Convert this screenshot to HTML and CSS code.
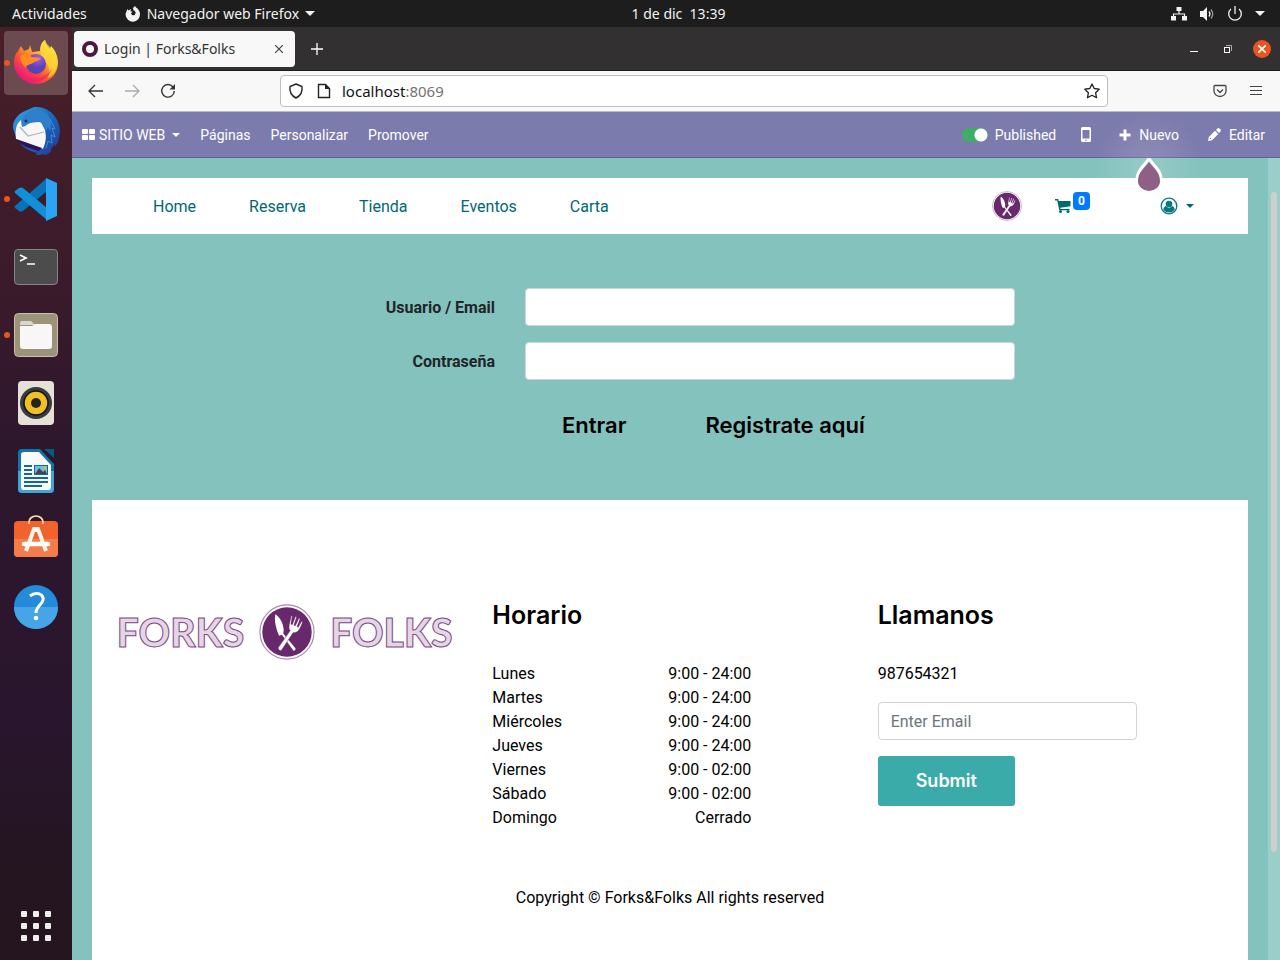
FILE: index.html
```html
<!DOCTYPE html>
<html lang="es">
<head>
<meta charset="utf-8">
<meta name="viewport" content="width=device-width, initial-scale=1">
<title>Login | Forks&amp;Folks</title>
<link rel="stylesheet" href="styles.css">
</head>
<body>
<svg class="defs" aria-hidden="true">
  <symbol id="emblem" viewBox="0 0 60 60">
    <circle cx="30" cy="30" r="29" fill="#fff" stroke="#a98aad" stroke-width="1.2"/>
    <circle cx="30" cy="30" r="26.5" fill="#68296c"/>
    <path d="M17.500 11c5 3 8.500 10 9 16.500l-.5 4L39 47.500q.5 2.500-2 2.500L24.500 33l-3 1C18.500 27 16 18 17.500 11z" fill="#fff"/>
    <path d="M20.500 47 33.500 28.500c-2.500-3-1-6 1-16l1.200.4-1.500 8.600 1.500.6 3.300-8.800 1.300.6-2.800 8.800 1.400.6 3.900-8.300 1.200.7-3.200 8.700 1.200.6 3.500-6.300 1.200.7c-3 8.500-5.500 12-10 11.200L24 49.500q-3 1-3.500-2.500z" fill="#fff" stroke="#68296c" stroke-width=".5"/>
  </symbol>
</svg>

<header class="panel">
  <div class="panel-left">
    <button class="panel-btn">Actividades</button>
    <button class="panel-btn app-menu">
      <svg width="16" height="16" viewBox="0 0 16 16"><path d="M1 6.500 2.500 3l1 1.500L6 3l-.5 2.500h2L6 7.500c1 3 5 2 4.500-1-.2-1.500-1-2-2-2L8 2l2-2c1 2 4.500 3 5 7.500a7 7.500 0 0 1-14.500 1z" fill="#f2f2f2"/></svg>
      Navegador web Firefox <span class="caret"></span>
    </button>
  </div>
  <time class="clock">1 de dic&nbsp; 13:39</time>
  <div class="panel-right">
    <svg width="16" height="16" viewBox="0 0 16 16" fill="#f2f2f2"><rect x="5.500" y="1" width="5" height="4"/><rect x="0" y="10" width="5" height="4.500"/><rect x="11" y="10" width="5" height="4.500"/><path d="M8 5v3M2.500 10V8h11v2" fill="none" stroke="#f2f2f2" stroke-width="1.200"/></svg>
    <svg width="16" height="16" viewBox="0 0 16 16"><path d="M1 5h3l4-4v14l-4-4H1z" fill="#f2f2f2"/><path d="M10 5.500q2 2.500 0 5" fill="none" stroke="#f2f2f2" stroke-width="1.300"/><path d="M12 3.500q3.500 4.500 0 9" fill="none" stroke="#999" stroke-width="1.300"/></svg>
    <svg width="16" height="16" viewBox="0 0 16 16" fill="none" stroke="#f2f2f2" stroke-width="1.300"><path d="M8 0v8M4 3a6.300 6.300 0 1 0 8 0"/></svg>
    <span class="caret"></span>
  </div>
</header>

<div class="desktop">
  <nav class="dock" aria-label="Aplicaciones">
    <button class="dock-app active running" aria-label="Firefox">
      <svg width="48" height="48" viewBox="0 0 48 48">
        <defs>
          <linearGradient id="fx" x1=".85" y1=".1" x2=".2" y2=".9"><stop offset="0" stop-color="#fff34a"/><stop offset=".35" stop-color="#ffb028"/><stop offset=".65" stop-color="#ff5235"/><stop offset="1" stop-color="#e71582"/></linearGradient>
          <radialGradient id="fp" cx=".6" cy=".2"><stop offset="0" stop-color="#a55cf8"/><stop offset="1" stop-color="#5b42b5"/></radialGradient>
        </defs>
        <path d="M5 14 9 7l3 5 5-2 1-4 2 7 8-1c0-6 2-9 5-11 1 4 2 6 5 9l1-3c5 5 7 11 7 17a22 21 0 0 1-44 0c0-5 1-8 3-11z" fill="url(#fx)"/>
        <path d="M29 11c0-5 1-8 4-10 1 6 12 9 12 24-1 8-5 12-9 14 3-7 1-16-7-19z" fill="#ffd83a" opacity=".75"/>
        <circle cx="24" cy="25" r="10" fill="url(#fp)"/>
        <path d="M8 17c5-3 9-1 12 1l9 1c-3 4-6 3-8 5l-2 1c-3 1-5 1-5 4-4-4-6-7-6-12z" fill="#ff8d22"/>
        <path d="M4 28c5 14 29 16 36 1-4 16-29 22-36-1z" fill="#ee2460" opacity=".65"/>
      </svg>
    </button>
    <button class="dock-app" aria-label="Thunderbird">
      <svg width="48" height="48" viewBox="0 0 48 48">
        <defs><linearGradient id="tb" x1="0" y1="0" x2="1" y2="1"><stop offset="0" stop-color="#3aa5e8"/><stop offset=".5" stop-color="#1769be"/><stop offset="1" stop-color="#2c318d"/></linearGradient></defs>
        <path d="M1 21C0 14 7 6 13 4l9-4c14-1 26 10 26 25l-2 10-3 5v-3l-4 5v3l-5 3-4-1-8 4 3-5C13 43 5 37 1 21z" fill="url(#tb)"/>
        <path d="m7 15 2-2 1 6c5-3 11-4 19-4l4 8c2 9 0 14-2 19L4 32c-1-8 0-14 3-17z" fill="#f7f7f7"/>
        <path d="m8 20 8 9 16-4" fill="none" stroke="#b5b5b5" stroke-width="1.200"/>
        <path d="m4 32 26 9-3 3C16 41 9 39 4 32z" fill="#30145a"/>
        <path d="M12 9c5-6 15-9 23-2 4 4 5 12 3 17l-2-4-2 4c-2-8-7-11-13-9-5 1-6 4-11 5-1-4 0-8 2-11z" fill="#2e80cc"/>
        <circle cx="14" cy="14" r="1.500" fill="#142d50"/>
        <path d="m38 12 5 10-3-1 3 9-4-2 1 8-4-2-2 7" fill="none" stroke="#3a90d6" stroke-width="1"/>
      </svg>
    </button>
    <button class="dock-app running" aria-label="Visual Studio Code">
      <svg width="48" height="48" viewBox="0 0 48 48"><path d="m3 33 4 3q2 1 4 0L35 16V3L3 31q-1 1 0 2z" fill="#0873b6"/><path d="m3 16 4-3q2-1 4 0l24 20v12L3 18q-1-1 0-2z" fill="#118fd8"/><path d="M34 3 45 8v33l-11 5z" fill="#2aa5f4"/></svg>
    </button>
    <button class="dock-app" aria-label="Terminal">
      <svg width="48" height="48" viewBox="0 0 48 48"><rect x="2.500" y="6.500" width="43" height="35" rx="3.500" fill="#4c4c4c" stroke="#858585"/><path d="m8 12 6 3-6 3M15 21h8" fill="none" stroke="#fff" stroke-width="1.700"/></svg>
    </button>
    <button class="dock-app running" aria-label="Archivos">
      <svg width="48" height="48" viewBox="0 0 48 48"><rect x="2.500" y="2.500" width="43" height="43" rx="4" fill="#9c937b" stroke="#c8c1ac"/><path d="M8 12q0-2 2-2h9l4 4H8z" fill="#dcd7cc"/><path d="M8 15h12l3-2h14q3 0 3 3v19q0 3-3 3H11q-3 0-3-3z" fill="#f8f7f5"/></svg>
    </button>
    <button class="dock-app" aria-label="Rhythmbox">
      <svg width="48" height="48" viewBox="0 0 48 48"><rect x="6" y="2" width="36" height="44" rx="4" fill="#e5e1d8"/><circle cx="24" cy="24" r="16" fill="#383b40"/><circle cx="24" cy="24" r="12" fill="#f0c020" stroke="#111" stroke-width="1.500"/><circle cx="24" cy="24" r="5" fill="#222"/></svg>
    </button>
    <button class="dock-app" aria-label="LibreOffice Writer">
      <svg width="48" height="48" viewBox="0 0 48 48"><path d="M10 2h18l14 15v25q0 4-4 4H10q-4 0-4-4V6q0-4 4-4z" fill="#1073aa"/><path d="M6 24h36v18q0 4-4 4H10q-4 0-4-4z" fill="#3fa5d5"/><path d="M32 2h10v9z" fill="#095a83"/><path d="M12 5h15l12 13v22q0 3-3 3H12q-3 0-3-3V8q0-3 3-3z" fill="#f9fafb"/><path d="M12 19h8M12 23h8M12 27h8M12 31h24M12 35h24M12 39h18" stroke="#15699a" stroke-width="2"/><rect x="22.500" y="18.500" width="13" height="9" fill="#6bc0ea" stroke="#15699a"/><path d="m23 27 4-6 4 4 2-2 2 4z" fill="#444"/><circle cx="33" cy="21" r="1.500" fill="#e8c02c"/></svg>
    </button>
    <button class="dock-app" aria-label="Ubuntu Software">
      <svg width="48" height="48" viewBox="0 0 48 48"><rect x="2" y="6" width="44" height="36" rx="4" fill="#f1622d"/><path d="M2 24h44v14q0 4-4 4H6q-4 0-4-4z" fill="#f47c4b"/><path d="M17 9V7a7 6 0 0 1 14 0v2" fill="none" stroke="#ffdcad" stroke-width="1.700"/><path d="m14 36 8-22h4l8 22M20 15l8 0" fill="none" stroke="#fff5ef" stroke-width="4"/><path d="M12 29h24" stroke="#fff" stroke-width="4.500" stroke-linecap="round"/></svg>
    </button>
    <button class="dock-app" aria-label="Ayuda">
      <svg width="48" height="48" viewBox="0 0 48 48"><circle cx="24" cy="24" r="22" fill="#238bd9"/><path d="M2 24a22 22 0 0 0 44 0z" fill="#45a5e6"/><path d="M18 13c6-5 14-2 13 4-1 5-7 6-7 13" fill="none" stroke="#fff" stroke-width="3"/><circle cx="24" cy="35" r="2.300" fill="#fff"/></svg>
    </button>
    <button class="dock-app dock-grid" aria-label="Mostrar aplicaciones">
      <svg width="30" height="30" viewBox="0 0 30 30" fill="#f0efeb"><rect width="6" height="6" rx="1"/><rect x="12" width="6" height="6" rx="1"/><rect x="24" width="6" height="6" rx="1"/><rect y="12" width="6" height="6" rx="1"/><rect x="12" y="12" width="6" height="6" rx="1"/><rect x="24" y="12" width="6" height="6" rx="1"/><rect y="24" width="6" height="6" rx="1"/><rect x="12" y="24" width="6" height="6" rx="1"/><rect x="24" y="24" width="6" height="6" rx="1"/></svg>
    </button>
  </nav>

  <div class="browser">
    <div class="tabs">
      <div class="tab">
        <svg width="16" height="16" viewBox="0 0 16 16"><circle cx="8" cy="8" r="6" fill="#fff" stroke="#4d1741" stroke-width="4"/></svg>
        <span class="tab-title">Login | Forks&amp;Folks</span>
        <button class="icon-btn" aria-label="Cerrar pestaña"><svg width="8" height="8" viewBox="0 0 8 8"><path d="m0 0 8 8M8 0 0 8" stroke="#444" stroke-width="1.200"/></svg></button>
      </div>
      <button class="icon-btn new-tab" aria-label="Nueva pestaña"><svg width="12" height="12" viewBox="0 0 12 12"><path d="M6 0v12M0 6h12" stroke="#fff" stroke-width="1.300"/></svg></button>
      <div class="window-btns">
        <button class="icon-btn" aria-label="Minimizar"><svg width="8" height="8" viewBox="0 0 8 8"><path d="M0 6.500h8" stroke="#fff"/></svg></button>
        <button class="icon-btn" aria-label="Restaurar"><svg width="8" height="8" viewBox="0 0 8 8" fill="none"><path d="M2 .5h5.500V6" stroke="#aaa"/><rect x=".5" y="2.500" width="5" height="5" stroke="#fff"/></svg></button>
        <button class="icon-btn close" aria-label="Cerrar"><svg width="8" height="8" viewBox="0 0 8 8"><path d="m0 0 8 8M8 0 0 8" stroke="#fff" stroke-width="1.600"/></svg></button>
      </div>
    </div>

    <div class="toolbar">
      <button class="tool" aria-label="Atrás"><svg width="16" height="14" viewBox="0 0 16 14"><path d="M15 7H1.500M7 1 1 7l6 6" fill="none" stroke="#333" stroke-width="1.300"/></svg></button>
      <button class="tool" aria-label="Adelante"><svg width="16" height="14" viewBox="0 0 16 14"><path d="M1 7h13.500M9 1l6 6-6 6" fill="none" stroke="#aaa" stroke-width="1.300"/></svg></button>
      <button class="tool" aria-label="Recargar"><svg width="16" height="16" viewBox="0 0 16 16"><path d="M13 4a6.300 6.300 0 1 0 1.300 4" fill="none" stroke="#333" stroke-width="1.400"/><path d="M15 1v5.500H9.500z" fill="#333"/></svg></button>
      <div class="url">
        <svg width="16" height="16" viewBox="0 0 16 16"><path d="m8 1 6 2.500q1 8-6 11.500Q1 11.500 2 3.500z" fill="none" stroke="#222" stroke-width="1.400"/></svg>
        <svg class="page-icon" width="16" height="16" viewBox="0 0 16 16"><path d="M2.500 1.500h7l4 4v9h-11z" fill="none" stroke="#222" stroke-width="1.400"/><path d="M9 1v5h5z" fill="#222"/></svg>
        <span class="address">localhost<span>:8069</span></span>
        <svg width="16" height="16" viewBox="0 0 16 16"><path d="m8 1 2.200 4.500 5 .7-3.600 3.500.9 5L8 12.300l-4.500 2.400.9-5L.8 6.200l5-.7z" fill="none" stroke="#222" stroke-width="1.300" stroke-linejoin="round"/></svg>
      </div>
      <button class="tool" aria-label="Pocket"><svg width="14" height="14" viewBox="0 0 14 14" fill="none" stroke="#444" stroke-width="1.300"><path d="M2 1.500h10q1 0 1 1V7a6 5.500 0 0 1-12 0V2.500q0-1 1-1z"/><path d="m4 5.500 3 3 3-3"/></svg></button>
      <button class="tool" aria-label="Menú"><svg width="12" height="12" viewBox="0 0 12 12"><path d="M0 1.500h12M0 5.500h12M0 9.500h12" stroke="#444" stroke-width="1.200"/></svg></button>
    </div>

    <nav class="editor-bar">
      <a href="#" class="site-link"><svg width="13" height="11" viewBox="0 0 13 11" fill="#fff"><rect width="6" height="5" rx="1"/><rect x="7" width="6" height="5" rx="1"/><rect y="6" width="6" height="5" rx="1"/><rect x="7" y="6" width="6" height="5" rx="1"/></svg>SITIO WEB <span class="caret small"></span></a>
      <a href="#">Páginas</a>
      <a href="#">Personalizar</a>
      <a href="#">Promover</a>
      <label class="publish"><input type="checkbox" class="switch" checked>Published</label>
      <button class="bar-btn phone" aria-label="Vista móvil"><svg width="10" height="15" viewBox="0 0 10 15"><path d="M1.500 0h7Q10 0 10 1.500v12Q10 15 8.500 15h-7Q0 15 0 13.500v-12Q0 0 1.500 0zM1.500 3v8.500h7V3z" fill="#fff" fill-rule="evenodd"/><circle cx="5" cy="13.200" r=".8" fill="#7c7bad"/></svg></button>
      <div class="new-wrap">
        <button class="bar-btn"><svg width="12" height="12" viewBox="0 0 12 12"><path d="M6 .5v11M.5 6h11" stroke="#fff" stroke-width="3"/></svg>Nuevo</button>
        <svg class="tip" width="28" height="36" viewBox="0 0 28 36"><path d="M14 1.500C10 8 2 13 2 22M14 1.500C18 8 26 13 26 22" fill="none" stroke="#fff" stroke-width="3"/><path d="M14 5C10 11 3 15 3 24a11 10 0 0 0 22 0C25 15 18 11 14 5z" fill="#8f5f86"/></svg>
      </div>
      <button class="bar-btn edit"><svg width="13" height="13" viewBox="0 0 13 13"><path d="m0 13 .8-4L7 2.800 10.200 6 4 12.200zM8 2l1.500-1.500q1-.8 2 0l1 1q.8 1 0 2L11 5z" fill="#fff"/><path d="m2 10 1 1" stroke="#7c7bad"/></svg>Editar</button>
    </nav>

    <div class="viewport">
      <main class="page">
        <nav class="site-nav">
          <a href="#">Home</a><a href="#">Reserva</a><a href="#">Tienda</a><a href="#">Eventos</a><a href="#">Carta</a>
          <div class="nav-tools">
            <a href="#" aria-label="Forks&amp;Folks"><svg width="30" height="30"><use href="#emblem"/></svg></a>
            <a href="#" class="cart" aria-label="Carrito"><svg width="16" height="14" viewBox="0 0 16 14"><path d="M0 0h3.200l.5 2H15.500v5.300L5.300 8.700l.3 1.300H14.500v1.300H4.300L2.200 1.500H0z" fill="#00686f"/><circle cx="5.500" cy="12.500" r="1.500" fill="#00686f"/><circle cx="13" cy="12.500" r="1.500" fill="#00686f"/></svg><span class="badge">0</span></a>
            <a href="#" class="user" aria-label="Usuario"><svg width="18" height="18" viewBox="0 0 18 18"><circle cx="9" cy="9" r="7.800" fill="#fff" stroke="#00747b" stroke-width="1.300"/><circle cx="9" cy="7" r="3.300" fill="#00747b"/><path d="M3.300 13q.2-3.500 2.500-4 3.200 3.300 6.400 0 2.300.5 2.500 4-5.700 5-11.400 0z" fill="#00747b"/></svg><span class="caret small"></span></a>
          </div>
        </nav>

        <form class="login">
          <label for="login">Usuario / Email</label><input id="login" type="text">
          <label for="password">Contraseña</label><input id="password" type="password">
          <div class="actions"><button type="button">Entrar</button><button type="button">Registrate aquí</button></div>
        </form>

        <footer class="footer">
          <div class="columns">
            <div class="brand"><span>FORKS</span><svg width="56" height="56"><use href="#emblem"/></svg><span>FOLKS</span></div>
            <section>
              <h2>Horario</h2>
              <table>
                <tr><td>Lunes</td><td>9:00 - 24:00</td></tr>
                <tr><td>Martes</td><td>9:00 - 24:00</td></tr>
                <tr><td>Miércoles</td><td>9:00 - 24:00</td></tr>
                <tr><td>Jueves</td><td>9:00 - 24:00</td></tr>
                <tr><td>Viernes</td><td>9:00 - 02:00</td></tr>
                <tr><td>Sábado</td><td>9:00 - 02:00</td></tr>
                <tr><td>Domingo</td><td>Cerrado</td></tr>
              </table>
            </section>
            <section>
              <h2>Llamanos</h2>
              <p>987654321</p>
              <form class="newsletter">
                <input type="email" placeholder="Enter Email" aria-label="Email">
                <button type="button">Submit</button>
              </form>
            </section>
          </div>
          <p class="copyright">Copyright © Forks&amp;Folks All rights reserved</p>
        </footer>
      </main>
      <div class="scrollbar"><div class="thumb"></div></div>
    </div>
  </div>
</div>
</body>
</html>
```

FILE: styles.css
```css
* { box-sizing: border-box; }
body {
  margin: 0;
  height: 100vh;
  display: flex;
  flex-direction: column;
  overflow: hidden;
  font: 16px/24px Roboto, "Liberation Sans", sans-serif;
  color: #000;
}
button, input { font: inherit; color: inherit; }
button { border: 0; padding: 0; background: none; cursor: pointer; white-space: nowrap; }
a { color: inherit; text-decoration: none; }
svg { display: block; flex: none; }
.defs { position: absolute; width: 0; height: 0; }
.caret {
  width: 0;
  border: 5px solid transparent;
  border-top-color: currentColor;
  border-bottom: 0;
}
.caret.small { border-width: 4px 4px 0; }

/* Desktop panel */
.panel {
  display: grid;
  grid-template-columns: 1fr auto 1fr;
  align-items: center;
  height: 27px;
  padding: 0 15px 0 12px;
  background: #1d1d1d;
  color: #f2f2f2;
  font: 14px/26px "Noto Sans", sans-serif;
}
.panel-left, .panel-right, .panel-btn { display: flex; align-items: center; }
.panel-left { gap: 38px; }
.app-menu { gap: 6px; }
.panel-right { justify-content: flex-end; gap: 12px; }
.clock { white-space: nowrap; padding-left: 80px; }

.desktop { flex: 1; min-height: 0; display: flex; }
.dock {
  flex: none;
  width: 72px;
  padding: 4px 4px 2px;
  display: flex;
  flex-direction: column;
  gap: 4px;
  background: linear-gradient(#481f28, #391a2b 30%, #2d172d 45%, #29152d 75%, #241521 90%, #24151e);
}
.dock-app {
  position: relative;
  height: 64px;
  flex: none;
  display: flex;
  align-items: center;
  justify-content: center;
  border-radius: 4px;
}
.dock-app.active { background: #6b4a50; }
.dock-app.running::before {
  content: "";
  position: absolute;
  left: 0;
  width: 6px;
  height: 6px;
  border-radius: 50%;
  background: #ea5420;
}
.dock-grid { margin-top: auto; }

/* Browser chrome */
.browser { flex: 1; min-width: 0; display: flex; flex-direction: column; }
.tabs {
  height: 44px;
  flex: none;
  display: flex;
  align-items: center;
  padding: 0 6px 0 2px;
  background: #323031;
  border-bottom: 1px solid #1d1b1c;
}
.tab {
  width: 221px;
  height: 36px;
  display: flex;
  align-items: center;
  gap: 6px;
  padding: 0 4px 0 8px;
  border-radius: 4px;
  background: #f8f8f8;
  color: #333;
  font: 14px/20px "Noto Sans", sans-serif;
}
.tab-title { flex: 1; white-space: nowrap; }
.icon-btn { width: 24px; height: 24px; display: flex; align-items: center; justify-content: center; }
.new-tab { margin-left: 10px; }
.window-btns { margin-left: auto; display: flex; gap: 10px; }
.icon-btn.close { position: relative; z-index: 0; }
.icon-btn.close::before {
  content: "";
  position: absolute;
  inset: 3px;
  z-index: -1;
  border-radius: 50%;
  background: #e95420;
}
.toolbar {
  height: 41px;
  flex: none;
  display: flex;
  align-items: center;
  padding: 0 6px;
  background: #f8f8f8;
  border-bottom: 1px solid #bdbdbd;
}
.tool { width: 36px; height: 32px; display: flex; align-items: center; justify-content: center; }
.url {
  flex: 1;
  height: 32px;
  margin: 0 94px;
  padding: 0 7px;
  display: flex;
  align-items: center;
  gap: 10px;
  border: 1px solid #bfbfbf;
  border-radius: 4px;
  background: #fff;
  font: 15px/20px "Noto Sans", sans-serif;
  color: #111;
}
.page-icon { margin-left: 2px; }
.address { flex: 1; }
.address span { color: #737373; }

/* Website editor bar */
.editor-bar {
  height: 46px;
  flex: none;
  display: flex;
  align-items: center;
  gap: 20px;
  padding: 0 15px 0 10px;
  color: #fff;
  font-size: 14px;
  line-height: 20px;
  background: #7c7bad;
  border-bottom: 1px solid #62619a;
  position: relative;
  z-index: 1;
  white-space: nowrap;
}
.site-link, .publish, .bar-btn { display: flex; align-items: center; }
.site-link { gap: 4px; }
.site-link .caret { margin-left: 3px; }
.publish { margin-left: auto; gap: 7px; }
.switch {
  appearance: none;
  margin: 0;
  width: 26px;
  height: 14px;
  border-radius: 7px;
  background: radial-gradient(circle at 19px 7px, #fff 6px, #40ad67 7px);
}
.bar-btn { gap: 8px; }
.phone { margin: 0 8px 0 5px; }
.new-wrap { position: relative; }
.edit { margin-left: 9px; }
.new-wrap::before {
  content: "";
  position: absolute;
  left: -30px;
  top: -16px;
  width: 120px;
  height: 120px;
  border-radius: 50%;
  background: radial-gradient(#ffffff26, #ffffff00 65%);
  pointer-events: none;
}
.tip { position: absolute; left: 16px; top: 32px; }

/* Website */
.viewport { flex: 1; min-height: 0; display: flex; background: #84c2bd; }
.page {
  flex: 1;
  min-width: 0;
  padding: 20px 20px 0;
  display: flex;
  flex-direction: column;
  overflow: hidden;
}
.scrollbar { flex: none; width: 12px; padding: 34px 3px 0; background: #9acec9; }
.thumb { height: 86%; border-radius: 3px; background: #cfcfcf; }
.site-nav {
  min-height: 56px;
  flex: none;
  display: flex;
  align-items: center;
  gap: 53px;
  padding: 0 54px 0 61px;
  background: #fff;
  color: #00686f;
}
.site-nav > a { padding-top: 2px; }
.nav-tools { margin-left: auto; display: flex; align-items: center; }
.cart { display: flex; align-items: center; gap: 2px; margin: 0 70px 0 33px; }
.badge {
  align-self: flex-start;
  margin-top: -5px;
  margin-bottom: 5px;
  padding: 0 5px;
  border-radius: 4px;
  background: #007bff;
  color: #fff;
  font-size: 12px;
  font-weight: 700;
  line-height: 18px;
}
.user { display: flex; align-items: center; gap: 8px; }

.login {
  width: 100%;
  max-width: 690px;
  margin: 54px auto 60px;
  display: grid;
  grid-template-columns: 170px 1fr;
  gap: 16px 30px;
  align-items: center;
}
.login label { padding-top: 2px; text-align: right; font-weight: 700; color: #212529; }
.login input, .newsletter input {
  width: 100%;
  height: 38px;
  padding: 0 12px;
  border: 1px solid #ced4da;
  border-radius: 4px;
  background: #fff;
}
.actions {
  grid-column: 2;
  display: flex;
  gap: 79px;
  padding: 14px 37px 0;
  font: 600 22px/30px Inter, sans-serif;
}

.footer { flex: 1 0 auto; padding: 95px 0 50px; background: #fff; }
.columns { display: grid; grid-template-columns: repeat(3, 1fr); }
.columns > * { padding: 0 15px; }
.brand {
  display: flex;
  align-items: center;
  justify-content: center;
  align-self: start;
  gap: 15px;
  margin-top: 8px;
  font: 900 39px/58px Lato, sans-serif;
  color: #e4d6e6;
  -webkit-text-stroke: 1px #7d4883;
}
h2 { margin: 0 0 27px; font: 600 25px/40px Inter, sans-serif; }
table { width: 259px; border-collapse: collapse; }
td { padding: 0; }
td:last-child { text-align: right; }
p { margin: 0; }
.newsletter { width: 259px; margin-top: 16px; }
.newsletter input::placeholder { color: #6c757d; opacity: 1; }
.newsletter button {
  margin-top: 16px;
  padding: 0 38px;
  border-radius: 3px;
  background: #3aaba8;
  color: #fff;
  font: 600 18px/50px Inter, sans-serif;
}
.copyright { margin-top: 56px; text-align: center; }
```
